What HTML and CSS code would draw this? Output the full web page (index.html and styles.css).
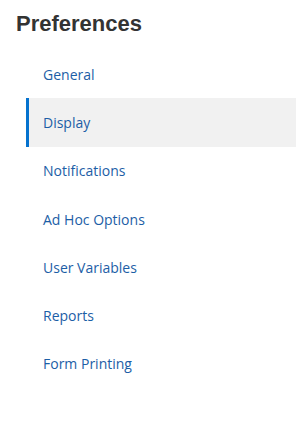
FILE: index.html
```html
<!DOCTYPE html>
<html>
<head>
<meta charset="utf-8">
<link rel="stylesheet" href="styles.css">
</head>
<body>
<div class="panel">
  <h1 class="title">Preferences</h1>
  <ul class="nav">
    <li class="nav-item"><a class="nav-link">General</a></li>
    <li class="nav-item active"><a class="nav-link">Display</a></li>
    <li class="nav-item"><a class="nav-link">Notifications</a></li>
    <li class="nav-item"><a class="nav-link">Ad Hoc Options</a></li>
    <li class="nav-item"><a class="nav-link">User Variables</a></li>
    <li class="nav-item"><a class="nav-link">Reports</a></li>
    <li class="nav-item"><a class="nav-link">Form Printing</a></li>
  </ul>
</div>
</body>
</html>
```
FILE: styles.css
```css
html, body {
  margin: 0;
  padding: 0;
  background: #ffffff;
}
.panel {
  width: 301px;
  height: 435px;
  box-sizing: border-box;
  padding-top: 11px;
}
.title {
  margin: 0 0 0 16px;
  height: 39px;
  font-family: "Liberation Sans", Arial, sans-serif;
  font-weight: bold;
  font-size: 22px;
  line-height: 25px;
  color: #333333;
}
.nav {
  list-style: none;
  margin: 0 0 0 26px;
  padding: 0;
  width: 270px;
  display: flex;
  flex-direction: column;
}
.nav-item {
  height: 48.3px;
  display: flex;
  align-items: center;
  border-left: 3px solid transparent;
  padding-left: 14px;
  box-sizing: border-box;
}
.nav-item.active {
  background: #f1f1f1;
  border-left-color: #0572ce;
}
.nav-link {
  font-family: "Open Sans", "Noto Sans", sans-serif;
  font-size: 14px;
  color: #1c5ea6;
  text-decoration: none;
}
```
